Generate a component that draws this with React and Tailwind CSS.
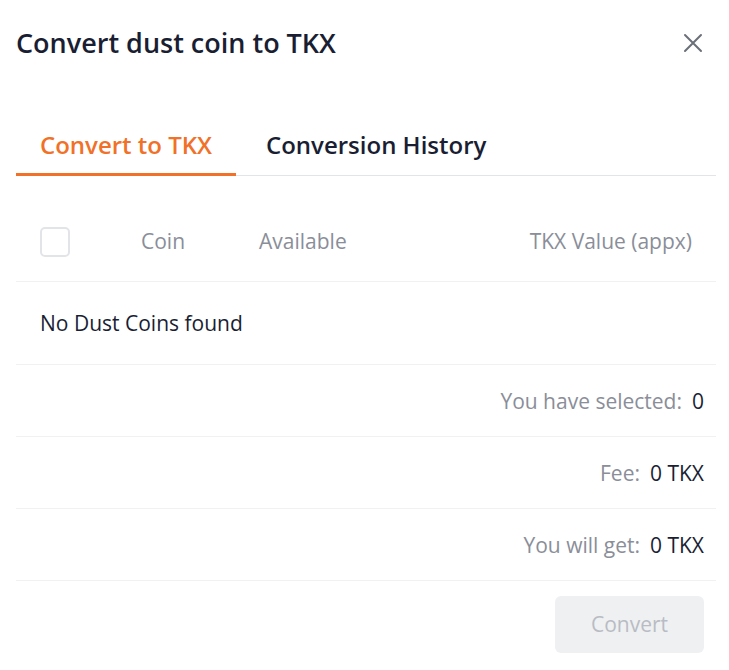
import React from "react";

export default function App() {
  return (
    <div className="w-[729px] h-[670px] bg-white overflow-hidden" style={{ fontFamily: '"Open Sans", sans-serif' }}>
      <div className="flex items-center justify-between pl-[16px] pr-[26px] pt-[25px]">
        <h1 className="text-[27px] leading-[36px] font-semibold text-[#1a1e33]">Convert dust coin to TKX</h1>
        <svg width="20" height="20" viewBox="0 0 20 20" className="text-[#6b6f78]">
          <path d="M2 2 L18 18 M18 2 L2 18" stroke="currentColor" strokeWidth="2" strokeLinecap="round" />
        </svg>
      </div>

      <div className="ml-[16px] w-[700px] mt-[55px]">
        <div className="flex border-b border-[#e3e4e8] h-[60px]">
          <div className="relative w-[220px] pl-[24px] pt-[11px]">
            <span className="text-[24px] leading-[36px] font-semibold text-[#f07127]">Convert to TKX</span>
            <div className="absolute left-0 right-0 bottom-[-1px] h-[3px] bg-[#f07127]" />
          </div>
          <div className="pl-[30px] pt-[11px]">
            <span className="text-[24px] leading-[36px] font-semibold text-[#1a1e33]">Conversion History</span>
          </div>
        </div>

        <div className="flex items-center h-[106px] border-b border-[#f0f1f3] pt-[26px] pl-[24px] pr-[24px] text-[21px] text-[#8a8e99]">
          <div className="w-[30px] h-[30px] rounded-[5px] border-2 border-[#e2e4e8]" />
          <span className="ml-[71px]">Coin</span>
          <span className="ml-[74px]">Available</span>
          <span className="ml-auto">TKX Value (appx)</span>
        </div>

        <div className="flex items-center h-[83px] border-b border-[#f0f1f3] pl-[24px] pt-[2px] text-[21px] text-[#1a1e33]">
          No Dust Coins found
        </div>

        <div className="flex items-center justify-end h-[72px] border-b border-[#f0f1f3] pr-[12px] pt-[3px] text-[21px]">
          <span className="text-[#8a8e99]">You have selected:</span>
          <span className="ml-[10px] text-[#1a1e33]">0</span>
        </div>
        <div className="flex items-center justify-end h-[72px] border-b border-[#f0f1f3] pr-[12px] pt-[2px] text-[21px]">
          <span className="text-[#8a8e99]">Fee:</span>
          <span className="ml-[10px] text-[#1a1e33]">0 TKX</span>
        </div>
        <div className="flex items-center justify-end h-[72px] border-b border-[#f0f1f3] pr-[12px] pt-[2px] text-[21px]">
          <span className="text-[#8a8e99]">You will get:</span>
          <span className="ml-[10px] text-[#1a1e33]">0 TKX</span>
        </div>

        <div className="flex justify-end pr-[12px] pt-[15px]">
          <button className="w-[149px] h-[57px] rounded-[6px] bg-[#eff0f2] text-[21px] text-[#b9bcc4]">Convert</button>
        </div>
      </div>
    </div>
  );
}
